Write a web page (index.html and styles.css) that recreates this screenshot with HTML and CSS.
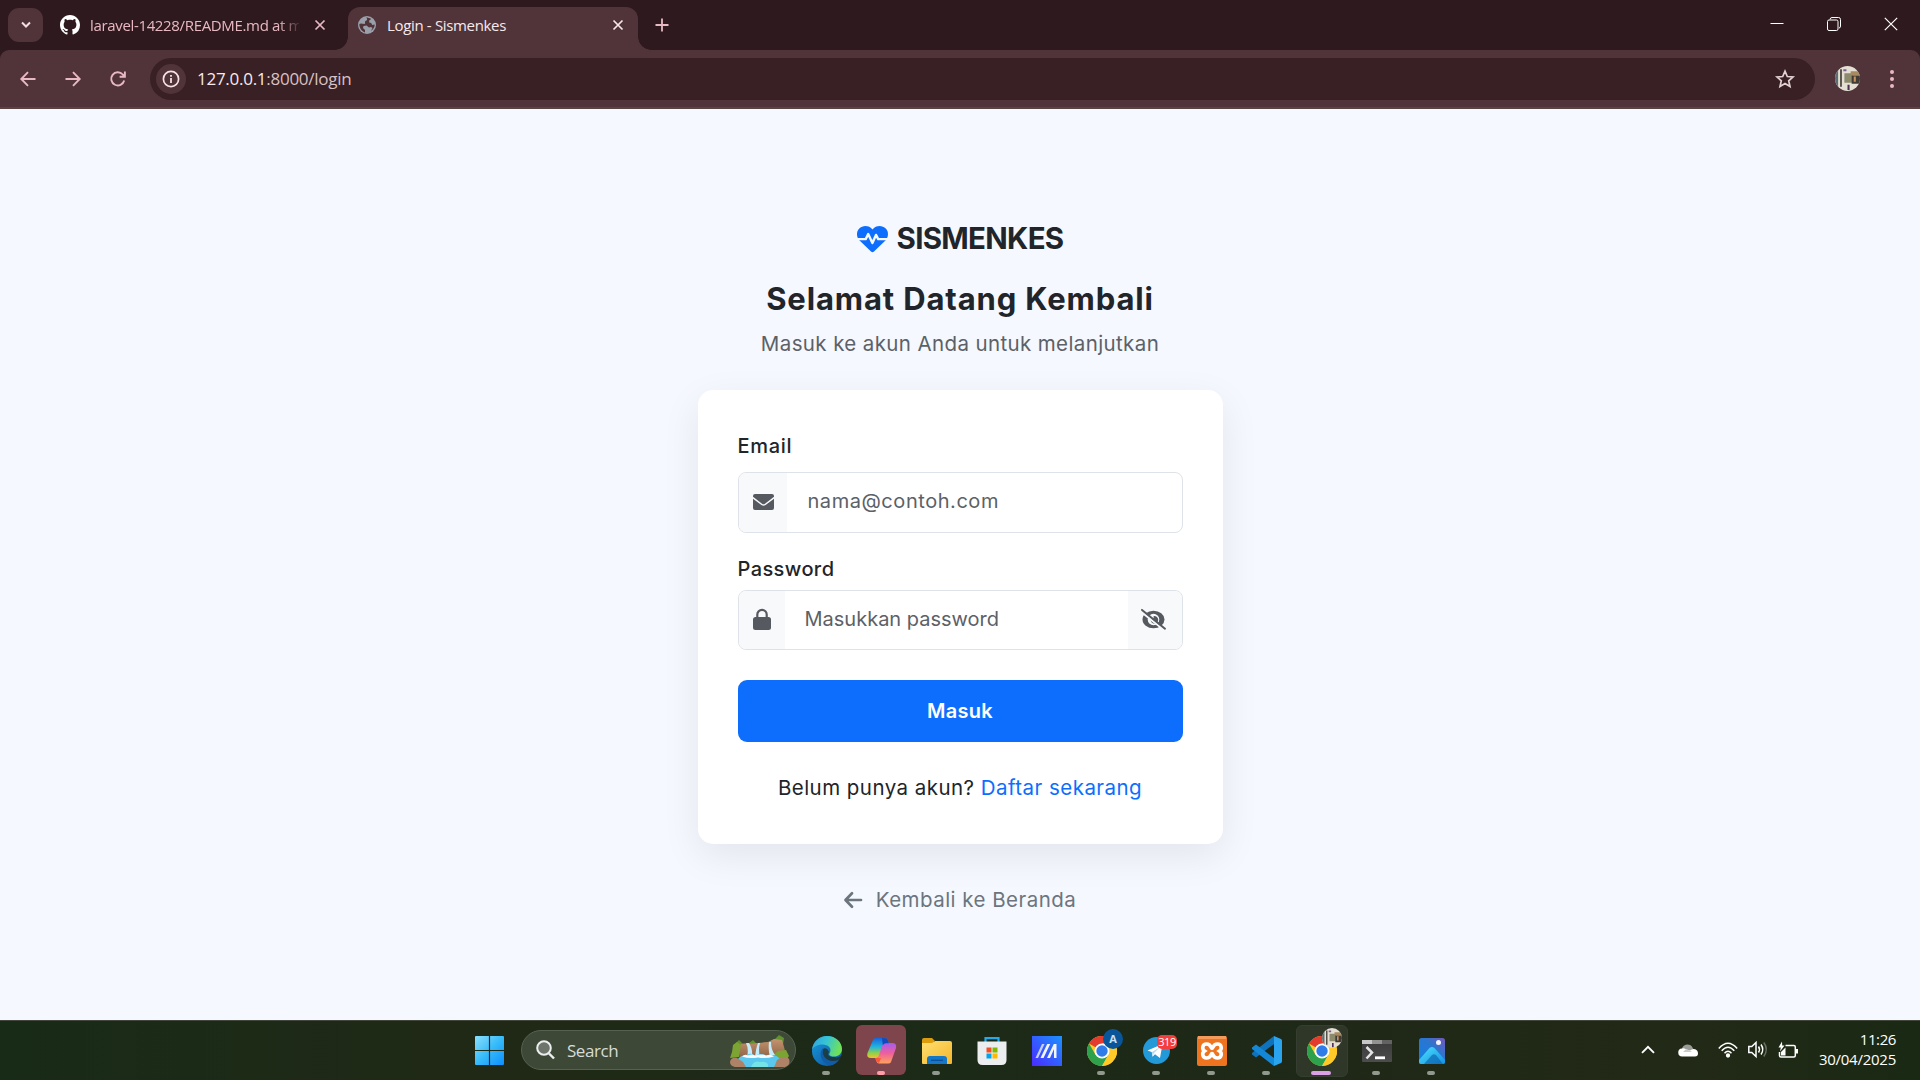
FILE: index.html
```html
<!DOCTYPE html>
<html lang="id">
<head>
<meta charset="utf-8">
<title>Login - Sismenkes</title>
<link rel="stylesheet" href="styles.css">
</head>
<body>
<svg class="defs" width="0" height="0" aria-hidden="true">
  <defs>
    <linearGradient id="win" x1="0" y1="0" x2="1" y2="1"><stop offset="0" stop-color="#8be0fc"/><stop offset=".5" stop-color="#37bbfa"/><stop offset="1" stop-color="#0c8fff"/></linearGradient>
    <linearGradient id="edgeTop" x1="0" y1="0" x2="1" y2=".3"><stop offset="0" stop-color="#2f9ee0"/><stop offset=".5" stop-color="#35c4d6"/><stop offset="1" stop-color="#6ee05c"/></linearGradient>
    <linearGradient id="edgeLow" x1="0" y1="0" x2="1" y2="1"><stop offset="0" stop-color="#1a9be0"/><stop offset="1" stop-color="#0b4f96"/></linearGradient>
    <linearGradient id="copA" x1="0" y1="0" x2="0" y2="1"><stop offset="0" stop-color="#1565e0"/><stop offset=".45" stop-color="#22b4dd"/><stop offset=".75" stop-color="#8fd04a"/><stop offset="1" stop-color="#f5c02c"/></linearGradient>
    <linearGradient id="copB" x1="0" y1="0" x2="0" y2="1"><stop offset="0" stop-color="#a55cf0"/><stop offset=".5" stop-color="#ee5f9c"/><stop offset="1" stop-color="#ffa35c"/></linearGradient>
    <linearGradient id="folder" x1="0" y1="0" x2="1" y2="1"><stop offset="0" stop-color="#ffdf70"/><stop offset="1" stop-color="#f4b62c"/></linearGradient>
    <linearGradient id="asus" x1="0" y1="1" x2="1" y2="0"><stop offset="0" stop-color="#4a2bff"/><stop offset="1" stop-color="#1c92ff"/></linearGradient>
    <linearGradient id="term" x1="0" y1="0" x2="0" y2="1"><stop offset="0" stop-color="#3a3a3a"/><stop offset="1" stop-color="#4c4c4c"/></linearGradient>
    <linearGradient id="photo" x1="0" y1="1" x2="1" y2="0"><stop offset="0" stop-color="#0f7fe6"/><stop offset=".6" stop-color="#2b76cf"/><stop offset="1" stop-color="#7656b8"/></linearGradient>
    <linearGradient id="hill" x1="0" y1="0" x2="1" y2="1"><stop offset="0" stop-color="#4fe0fb"/><stop offset="1" stop-color="#1391e6"/></linearGradient>
    <linearGradient id="rock" x1="0" y1="0" x2="0" y2="1"><stop offset="0" stop-color="#c49470"/><stop offset="1" stop-color="#8a6042"/></linearGradient>
    <symbol id="chrome" viewBox="0 0 30 30">
      <circle cx="15" cy="15" r="15" fill="#ffc928"/>
      <path d="M15 15 2 7.5A15 15 0 0 1 28 7.5H15z" fill="#e33b2e"/>
      <path d="M2 7.5A15 15 0 0 0 15 30L21.5 18.800 15 15 8.500 18.700z" fill="#2da14c"/>
      <path d="M15 7.500H28A15 15 0 0 1 15 30L21.500 18.800z" fill="#ffc928"/>
      <circle cx="15" cy="15" r="7.500" fill="#fff"/><circle cx="15" cy="15" r="5.700" fill="#2f7bea"/>
    </symbol>
    <symbol id="portrait" viewBox="0 0 24 24">
      <clipPath id="round"><circle cx="12" cy="12" r="12"/></clipPath>
      <g clip-path="url(#round)"><path fill="#e4dfd2" d="M0 0h24v24H0z"/><path fill="#5d6f72" d="M0 0h3v24H0z"/><path fill="#35302a" d="M5 3h1.500v17H5z"/><path fill="#8b8a6c" d="M9 7h8v9H9z"/><path fill="#a78a62" d="M15 5h9v4h-9z"/><path fill="#403c35" d="M16 9h8v8h-8z"/><path fill="#c8905f" d="M18 10h2v5h-2z"/><path fill="#7a5e93" d="M8 3h3v2H8z"/><path fill="#4c3354" d="M12 18h2v5h-2z"/></g>
    </symbol>
  </defs>
</svg>

<div class="screen">
  <header class="tabs">
    <div class="tab-search"><svg width="12" height="12" viewBox="0 0 12 12"><path d="m2 3.500 4 4 4-4" fill="none" stroke="#f3dfe2" stroke-width="2"/></svg></div>
    <div class="tab tab-idle">
      <svg width="20" height="20" viewBox="0 0 16 16" fill="#fff"><path d="M8 0C3.580 0 0 3.580 0 8c0 3.540 2.290 6.530 5.470 7.590.4.070.55-.17.55-.38 0-.19-.01-.82-.01-1.490-2.010.37-2.530-.49-2.690-.94-.09-.23-.48-.94-.82-1.130-.28-.15-.68-.52-.01-.53.63-.01 1.080.58 1.230.82.72 1.210 1.870.87 2.330.66.070-.52.28-.87.51-1.070-1.780-.2-3.640-.89-3.640-3.950 0-.87.31-1.590.82-2.150-.08-.2-.36-1.020.08-2.120 0 0 .67-.21 2.200.82.64-.18 1.320-.27 2-.27s1.360.09 2 .27c1.530-1.040 2.200-.82 2.200-.82.44 1.100.16 1.920.08 2.120.51.56.82 1.270.82 2.150 0 3.070-1.870 3.750-3.650 3.950.29.25.54.73.54 1.480 0 1.070-.01 1.930-.01 2.200 0 .21.15.46.55.38A8.010 8.010 0 0 0 16 8c0-4.420-3.580-8-8-8"/></svg>
      <span class="tab-title tab-title-idle">laravel-14228/README.md at m</span>
      <svg class="close" width="12" height="12" viewBox="0 0 12 12"><path d="m1.500 1.500 9 9m0-9-9 9" stroke="#e9b9c3" stroke-width="1.700"/></svg>
    </div>
    <div class="tab tab-active">
      <svg width="18" height="18" viewBox="0 0 18 18"><circle cx="9" cy="9" r="9" fill="#9aa0a9"/><path d="M8 1.500C10 3 9 4.500 7.500 5 6 6 8 7 6.500 8L3 7.500 1.300 8C1.300 12 4 15.500 7 16.500V14l-2-2 .5-2 3-.5 2.500 2 2-.5 1.500 1-1.500 3c2-1.300 3.700-3.700 3.700-6.500l-2.500.5-1-2-2-.5V4.500l2-1.500c-1.600-1-3.400-1.500-5.200-1.500z" fill="#50343a"/></svg>
      <span class="tab-title">Login - Sismenkes</span>
      <svg class="close" width="12" height="12" viewBox="0 0 12 12"><path d="m1.500 1.500 9 9m0-9-9 9" stroke="#f8e6e9" stroke-width="1.700"/></svg>
    </div>
    <svg class="plus" width="14" height="14" viewBox="0 0 14 14"><path d="M7 .5v13M.5 7h13" stroke="#e9b9c3" stroke-width="1.800"/></svg>
    <div class="window-buttons">
      <svg width="14" height="14" viewBox="0 0 14 14"><path d="M.5 6.500h13" stroke="#fff"/></svg>
      <svg width="14" height="14" viewBox="0 0 14 14" fill="none" stroke="#fff"><rect x=".5" y="3" width="10.500" height="10.500" rx="1.500"/><path d="M3 2.500Q3.200.5 5 .5h6.500q2 0 2 2V9q0 2-1.500 2"/></svg>
      <svg width="14" height="14" viewBox="0 0 14 14"><path d="m.8.8 12.400 12.400m0-12.400L.8 13.200" stroke="#fff" stroke-width="1.200"/></svg>
    </div>
  </header>

  <nav class="toolbar">
    <div class="nav-buttons">
      <svg width="16" height="16" viewBox="0 0 16 16"><path d="M15.500 8H1.500M8 1.200 1.300 8 8 14.800" /></svg>
      <svg width="16" height="16" viewBox="0 0 16 16"><path d="M.5 8h14M8 1.200 14.700 8 8 14.800"/></svg>
      <svg width="16" height="16" viewBox="0 0 16 16"><path d="M14.200 9.500A6.600 6.600 0 1 1 12.800 3.500L14.800 5.500M14.900.5v5.200H9.600"/></svg>
    </div>
    <div class="omnibox">
      <span class="site-info"><svg width="18" height="18" viewBox="0 0 18 18"><circle cx="9" cy="9" r="7.600" fill="none" stroke="#f6e1e5" stroke-width="1.700"/><path d="M9 8v5M9 5v1.800" stroke="#f6e1e5" stroke-width="1.800"/></svg></span>
      <span class="url">127.0.0.1<span class="path">:8000/login</span></span>
      <svg class="star" width="20" height="20" viewBox="0 0 20 20"><path d="m10 2.200 2.300 5.300 5.700.5-4.300 3.800 1.300 5.700-5-3-5 3 1.300-5.700L2 8l5.700-.5z" fill="none" stroke="#e2d0d3" stroke-width="1.700"/></svg>
    </div>
    <svg class="avatar" width="25" height="25"><use href="#portrait"/></svg>
    <svg class="menu" width="4" height="18" viewBox="0 0 4 18" fill="#e9b9c3"><circle cx="2" cy="2" r="2"/><circle cx="2" cy="9" r="2"/><circle cx="2" cy="16" r="2"/></svg>
  </nav>

  <main class="page">
    <div class="brand">
      <svg width="31" height="27" viewBox="0 0 31 27"><path d="M15.500 26.300q-.8 0-1.500-.7L2.300 14.200C-.6 11-.8 5.800 2 2.800 5.600-.9 11.200-.7 14.300 2.300l1.200 1.200 1.200-1.200c3.100-3 8.700-3.200 12.300.5 2.800 3 2.600 8.200-.3 11.400L17 25.600q-.7.7-1.500.7z" fill="#0d6efd"/><path d="M0 13.100h8.700l2.500-5 4.200 9 3.600-8.200 2.200 4.200H31" fill="none" stroke="#f5f8ff" stroke-width="2.400" stroke-linejoin="round"/></svg>
      <span>SISMENKES</span>
    </div>
    <h1>Selamat Datang Kembali</h1>
    <p class="lead">Masuk ke akun Anda untuk melanjutkan</p>

    <form class="card">
      <label class="label-email">Email</label>
      <div class="field field-email">
        <span class="addon"><svg width="21" height="16" viewBox="0 0 21 16" fill="#565a60"><path d="M0 4.700V14q0 2 2 2h17q2 0 2-2V4.700L12.600 11q-2.100 1.500-4.200 0z"/><path d="M0 2.800V2q0-2 2-2h17q2 0 2 2v.8l-9 6.900q-1.500 1-3 0z"/></svg></span>
        <span class="placeholder ph-email">nama@contoh.com</span>
      </div>
      <label class="label-password">Password</label>
      <div class="field field-password">
        <span class="addon"><svg width="18" height="21" viewBox="0 0 18 21"><path d="M4.300 9V5.500a4.700 4.700 0 0 1 9.400 0V9" fill="none" stroke="#565a60" stroke-width="2.200"/><rect y="8" width="18" height="13" rx="2.500" fill="#565a60"/></svg></span>
        <span class="placeholder ph-password">Masukkan password</span>
        <span class="addon toggle"><svg width="25" height="21" viewBox="0 0 25 21"><ellipse cx="12.500" cy="10.500" rx="11" ry="8.800" fill="#565a60"/><circle cx="12.500" cy="10.500" r="5.800" fill="#f8f9fb"/><path d="M12.500 7.200q1 3-2.800 3a3.800 3.800 0 1 0 2.800-3z" fill="#565a60"/><path d="M-.3 2.300 23.700 21.500" stroke="#f8f9fb" stroke-width="2.200"/><path d="M1 .9l23 18.800" stroke="#565a60" stroke-width="2" stroke-linecap="round"/></svg></span>
      </div>
      <button type="button" class="submit">Masuk</button>
      <p class="register">Belum punya akun? <a>Daftar sekarang</a></p>
    </form>

    <a class="back"><svg width="18" height="16" viewBox="0 0 18 16"><path d="M17 8H2M8 1.300 1.500 8 8 14.700" fill="none" stroke="#6c757d" stroke-width="2.700" stroke-linecap="round" stroke-linejoin="round"/></svg><span>Kembali ke Beranda</span></a>
  </main>

  <footer class="taskbar">
    <div class="app start"><svg width="29" height="29" viewBox="0 0 29 29" fill="url(#win)"><path d="M1 0h12.900v13.900H0V1q0-1 1-1zM15.100 0H28q1 0 1 1v12.900H15.100zM0 15.100h13.900V29H1q-1 0-1-1zM15.100 15.100H29V28q0 1-1 1H15.100z"/></svg></div>
    <div class="search">
      <svg width="19" height="20" viewBox="0 0 19 20"><circle cx="8" cy="8" r="6.800" fill="#6d756b" stroke="#eceef0" stroke-width="2"/><path d="m13 13.500 5 5" stroke="#eceef0" stroke-width="2.400"/></svg>
      <span>Search</span>
      <svg class="falls" width="60" height="32" viewBox="0 0 60 32">
        <path d="M5 8 9 4l4 4 6-1 4-3 4 4 12-2 6-3 4-4 5 3-1 7H5z" fill="#62912f"/>
        <path d="M8 11q3-5 10-3l10-1 10-1 6-3 8 1 4 14-3 5H10z" fill="url(#rock)"/>
        <path d="m0 22 2-6 1-7 4-3 4 3-2 12zM42 20l6-5 8-1 3 6-4 6z" fill="#7ba432"/>
        <path d="M16 7h3q4 6 3 14h-5q2-8-1-14zM28 7h2q-2 7 0 14h-5q1-9 3-14zM39 6h2q0 8 4 13l-5 2q-2-7-1-15z" fill="#c4ebfa"/>
        <path d="M8 23q3-4 9-4 4-3 8 1 6-4 12 0 8-3 13 3l-4 8H13z" fill="#59c7ee"/>
        <path d="M12 20.500q3-3 6-1 4-2 7 0 7-2 11 0 5-2 8 1-8 2.500-16 1-9 1.500-16-1z" fill="#f4fbff"/>
        <path d="M0 26q1-5 7-4l6 4 3 5H5q-5-1-5-5zM45 29l2-5q9-6 12-1 2 6-4 8H44z" fill="#ae8267"/>
        <path d="M21 31q3-7 9-5 9-1 8 5z" fill="#75e3e6"/>
      </svg>
    </div>

    <div class="apps">
      <div class="app running"><svg width="30" height="30" viewBox="0 0 30 30"><circle cx="15" cy="15" r="15" fill="url(#edgeLow)"/><path d="M0 14C1 5 8 0 15 0c9 0 15 6.500 15 13 0 5-4 7.500-8 7.500-3.500 0-5.500-1.500-4.500-3 3-5-1-9-7-9C5 8.500 1 11 0 14z" fill="url(#edgeTop)"/><path d="M11 13c-2 5 1 12 10 12 3 0 5-1 7-2l2-1v-3c-2 2-5 3-8 2-5 0-7-2-5-5-1-3-4-5-6-3z" fill="#1f2916" opacity=".7"/><path d="M11 12c-5 5-2 15 7 17.500 3-.5 6-2 8-5-8 3-17-2-15-12.500z" fill="#115ca8"/></svg></div>
      <div class="app tile-copilot running"><svg width="30" height="26" viewBox="0 0 30 26"><path d="M6 2q.6-2 3-2h9q2 0 2.800 2l1 3h-3q-2 0-3 3l-2.500 9q-1 3-4 3H4q-5 0-3.500-5z" fill="url(#copA)"/><path d="M24 24q-.6 1.500-3 1.500H12q-2 0-3-3l-.5-2.500q2.500 0 3.500-3L15 8q1-3 4-3h6q5 0 4 5z" fill="url(#copB)"/><path d="m15 0 3 .2q2 0 2.800 2l1 3h-3q-2 0-3 2z" fill="#1648bd"/><path d="m8 20h6l-2 5q-2 0-3-3z" fill="#fa5737"/></svg></div>
      <div class="app running"><svg width="30" height="28" viewBox="0 0 30 28"><path d="M0 3q0-2 2-2h8l3 3h-1v6H0z" fill="#dc9c0d"/><path d="M0 6h10l3-2h15q2 0 2 2v20q0 1-1 1H1q-1 0-1-1z" fill="url(#folder)"/><path d="M5 27v-5q0-3 3-3h14q3 0 3 3v5z" fill="#1577c8"/><path d="M9 23.300h12" stroke="#0b4f96" stroke-width="1.300"/></svg></div>
      <div class="app"><svg width="30" height="30" viewBox="0 0 30 30"><path d="M8.500 7V2.200H21.500V7" fill="none" stroke="#25a9e8" stroke-width="2.200"/><path d="M.5 5.500h29V24q0 5-5 5h-19q-5 0-5-5z" fill="#ecedef"/><path fill="#f25022" d="M9.500 11.500h5v5h-5z"/><path fill="#7fba00" d="M15.500 11.500h5v5h-5z"/><path fill="#00a4ef" d="M9.500 17.500h5v5h-5z"/><path fill="#ffb900" d="M15.500 17.500h5v5h-5z"/></svg></div>
      <div class="app"><svg width="30" height="30" viewBox="0 0 30 30"><path fill="url(#asus)" d="M0 0h30v30H0z"/><path d="M3.500 22 10 8h2.500L6 22z" fill="#c5cfff"/><path d="M8.500 22 15.200 8h3L11.500 22z" fill="#f4f6ff"/><path d="M15 22 21.800 8h2.700v14H22v-9l-4 9z" fill="#f4f6ff"/></svg></div>
      <div class="app running"><svg width="30" height="30"><use href="#chrome"/></svg><b class="profile-letter">A</b></div>
      <div class="app running"><svg width="27" height="27" viewBox="0 0 27 27"><circle cx="13.500" cy="13.500" r="13.500" fill="#2499d8"/><path d="m4.500 13.500 15-6.500-2.500 14-5-3.700-2.500 2.400-.8-4.700z" fill="#fff"/><path d="m9 15 8-5-6 6-1.500 3.500z" fill="#b7d9ee"/></svg><b class="count">319</b></div>
      <div class="app running"><svg width="30" height="30" viewBox="0 0 30 30"><rect width="30" height="30" rx="2" fill="#ef7420"/><path d="M1 0h28v3H1z" fill="#f59a5a"/><path d="M9.500 8c-4 0-5 5-2 7-3 2-2 7 2 7 5 0 4-4.500 5.500-4.500S15.500 22 20.500 22c4 0 5-5 2-7 3-2 2-7-2-7-5 0-4 4.500-5.500 4.500S14.500 8 9.500 8z" fill="none" stroke="#fff" stroke-width="3.600"/></svg></div>
      <div class="app running"><svg width="30" height="30" viewBox="0 0 30 30"><path d="M22 0v8L4 21.500 0 18.500v-1.500z" fill="#0e72bd"/><path d="M22 30v-8L4 8.500 0 11.500V13z" fill="#1488d6"/><path d="m22 0 7 3q1 .5 1 2v20q0 1.500-1 2l-7 3z" fill="#2ba4ef"/></svg></div>
      <div class="app tile-current current"><svg width="30" height="30"><use href="#chrome"/></svg><svg class="profile-photo" width="20" height="20"><use href="#portrait"/></svg></div>
      <div class="app running"><svg width="30" height="22" viewBox="0 0 30 22"><rect width="30" height="22" rx="1" fill="url(#term)"/><path fill="#c7c7c7" d="M0 0h10v4H0z"/><path fill="#929292" d="M10 0h10v4H10z"/><path fill="#626262" d="M20 0h10v4H20z"/><path d="m4.500 7 5.500 5.500-5.500 6" fill="none" stroke="#e4e4e4" stroke-width="2.500"/><path d="M13 17.800h10" stroke="#fff" stroke-width="2.800"/></svg></div>
      <div class="app running"><svg width="26" height="26" viewBox="0 0 26 26"><rect width="26" height="26" rx="2.500" fill="url(#photo)"/><path d="m0 22 10.500-12q2.500-2 5 0L26 22v2q0 2-2 2H2q-2 0-2-2z" fill="url(#hill)"/><path d="m5 26 8-9q2-1.500 4 0l7 9z" fill="#0d62ac" opacity=".65"/><circle cx="19.500" cy="4.500" r="2.500" fill="#f2f4f8"/></svg></div>
    </div>

    <div class="tray">
      <svg width="14" height="9" viewBox="0 0 14 9"><path d="m1 7.800 6-6 6 6" fill="none" stroke="#fff" stroke-width="1.900"/></svg>
      <svg class="cloud" width="20" height="14" viewBox="0 0 20 14"><path d="M4 9a5.500 5.500 0 0 1 11-3.500L18 9z" fill="#9a9d97"/><path d="M4.500 13.500a4 4 0 0 1-.5-8q2-.5 4 .8l4 1.200q2-1.700 4-1.500 4 .7 4 4.500 0 3-3 3z" fill="#fff"/><path d="m5 9 3-2.700q4 1 6 2.700z" fill="#c9ccc8"/></svg>
      <svg class="wifi" width="20" height="16" viewBox="0 0 20 16" fill="none" stroke="#fff" stroke-width="1.500"><path d="M.8 6.500Q10-4 19.200 6.500M3.700 8.800q6.300-7.300 12.600 0M6.500 11.200q3.500-3.900 7 0"/><circle cx="10" cy="13.500" r="1.400" fill="#fff"/></svg>
      <svg class="volume" width="20" height="17" viewBox="0 0 20 17" fill="none" stroke="#fff" stroke-width="1.500"><path d="M.8 5.500h3L8 1.500v14l-4.200-4h-3z"/><path d="M10.500 5.500q2 3 0 6M13 3.500q3.500 5 0 10"/><path d="M15.800 1.500q5 7 0 14" stroke="#687062"/></svg>
      <svg class="battery" width="21" height="18" viewBox="0 0 21 18" fill="none" stroke="#fff" stroke-width="1.500"><path d="M7.500 4.500h8.300q1.500 0 1.500 1.500v8.500q0 1.500-1.500 1.500H3q-1.500 0-1.500-1.500V11"/><path d="M19 8v4.500" stroke-width="2"/><path d="M4 .5.500 6.500h2.300L2 10.500 6.500 4.500H4.200z" fill="#fff" stroke="none"/><path d="M3 14.500V11l4.500-4.500v8z" fill="#fff" stroke="none"/></svg>
      <div class="clock"><span class="time">11:26</span><span class="date">30/04/2025</span></div>
    </div>
  </footer>
</div>
</body>
</html>
```
FILE: styles.css
```css
* { box-sizing: border-box; }
body { margin: 0; overflow: hidden; font-family: "Open Sans", "Noto Sans", sans-serif; }
svg { display: block; flex: none; overflow: visible; }
.defs { position: absolute; }
.screen { width: 1920px; height: 1080px; display: flex; flex-direction: column; background: #2e191e; }

/* Browser tabs */
.tabs { height: 50px; flex: none; display: flex; background: #2e191e; padding-left: 8px; }
.tab-search { width: 35px; height: 34px; margin-top: 8px; border-radius: 11px; background: #50343a; display: grid; place-items: center; }
.tab { height: 43px; margin-top: 7px; padding-bottom: 7px; display: flex; align-items: center; white-space: nowrap; font-size: 15px; }
.tab-idle { width: 305px; padding-left: 17px; padding-right: 22px; }
.tab-idle .tab-title { color: #e9b9c3; margin-left: 10px; width: 209px; overflow: hidden; -webkit-mask-image: linear-gradient(90deg, #000 188px, transparent 212px); mask-image: linear-gradient(90deg, #000 188px, transparent 212px); }
.tab-title { letter-spacing: -.34px; line-height: 24px; }
.tab-active { position: relative; width: 290px; padding-left: 10px; padding-right: 14px; border-radius: 12px 12px 0 0; background: #50343a; color: #f8e9eb; }
.tab-active::before, .tab-active::after { content: ""; position: absolute; bottom: 0; width: 13px; height: 13px; }
.tab-active::before { left: -13px; background: radial-gradient(circle at 0 0, transparent 12.500px, #50343a 13px); }
.tab-active::after { right: -13px; background: radial-gradient(circle at 100% 0, transparent 12.500px, #50343a 13px); }
.tab-active .tab-title { margin-left: 11px; }
.close { margin-left: auto; }
.plus { margin: 18px 0 0 17px; }
.window-buttons { display: flex; gap: 43px; margin: 17px 22px 0 auto; }

/* Address bar */
.toolbar { height: 59px; flex: none; display: flex; align-items: center; background: linear-gradient(#50343a, #50343a) 0 0 / 100% 57px no-repeat, #5a4442; padding: 0 26px 2px 20px; border-radius: 9px 9px 0 0; }
.nav-buttons { display: flex; gap: 29px; fill: none; stroke: #e9b9c3; stroke-width: 1.900; }
.omnibox { width: 1665px; height: 42px; margin-left: 24px; border-radius: 21px; background: #382024; display: flex; align-items: center; padding: 0 20px 0 6px; }
.site-info { width: 30px; height: 30px; border-radius: 50%; background: #50343a; display: grid; place-items: center; }
.url { margin-left: 11px; font-size: 17px; letter-spacing: -.27px; color: #f8eaec; }
.path { color: #d8c1c5; }
.star { margin-left: auto; }
.avatar { margin-left: 20px; }
.menu { margin-left: auto; }

/* Login page */
.page { height: 911px; flex: none; background: #f5f8ff; display: flex; flex-direction: column; align-items: center; font-family: Inter, "Open Sans", sans-serif; font-size: 20px; color: #212529; }
.brand { display: flex; align-items: center; gap: 9px; height: 40px; margin-top: 109px; font-size: 29.500px; font-weight: 700; letter-spacing: -.7px; }
.brand svg { margin-top: 2px; }
.brand span { line-height: 40px; }
h1 { margin: 22px 0 0; font-size: 31px; line-height: 38px; font-weight: 700; letter-spacing: .86px; }
.lead { margin: 11px 0 0; font-size: 20.500px; line-height: 30px; letter-spacing: .38px; color: #5c6167; }
.card { width: 525px; height: 454px; margin-top: 31px; padding: 41px 40px 0; border-radius: 15px; background: #fff; box-shadow: 0 12px 38px rgba(0, 0, 0, .08); display: flex; flex-direction: column; }
label { line-height: 30px; font-weight: 500; }
.label-email { letter-spacing: .7px; }
.label-password { letter-spacing: .4px; margin-top: 21px; }
.field { display: flex; border: 1px solid #dee2e9; border-radius: 8px; overflow: hidden; }
.field-email { height: 61px; margin-top: 11px; }
.field-password { height: 60px; margin-top: 6px; }
.addon { width: 46px; background: #f8f9fb; display: flex; align-items: center; justify-content: flex-start; padding: 0 0 1px 14px; }
.field-email .addon { width: 48px; }
.toggle { width: 54px; margin-left: auto; padding-left: 13px; }
.placeholder { margin-left: 20px; line-height: 57px; color: #5c6167; }
.ph-email { letter-spacing: .55px; margin-left: 21px; }
.ph-password { letter-spacing: 0; }
.submit { width: 100%; height: 62px; margin-top: 30px; border: 0; border-radius: 9px; background: #0d6efd; color: #fff; font: 600 20px Inter, sans-serif; letter-spacing: .3px; }
.register { margin: 31px 0 0; font-size: 20.500px; line-height: 30px; text-align: center; letter-spacing: .46px; }
.register a { color: #0d6efd; }
.back { display: flex; align-items: center; gap: 14px; margin-top: 41px; font-size: 20.500px; line-height: 30px; letter-spacing: .47px; color: #6c757d; }

/* Taskbar */
.taskbar { height: 60px; flex: none; display: flex; border-top: 1px solid #43473b; background: linear-gradient(90deg, #182b16, #202916 25%, #1b2a16 50%, #202816 75%, #222917 88%, #1a2914); padding-left: 462px; color: #fff; }
.app { position: relative; width: 55px; height: 59px; display: grid; place-items: center; }
.search { width: 275px; height: 40px; margin: 9px 3px 0 4px; padding-left: 14px; border: 1px solid #566152; border-radius: 20px; background: #3d4936; display: flex; align-items: center; font-size: 17px; letter-spacing: -.45px; color: #d8dcd6; }
.search span { margin-left: 12px; }
.falls { margin-left: auto; margin-right: 5px; margin-top: 3px; }
.apps { display: flex; }
.running::after, .current::after { content: ""; position: absolute; bottom: 5px; left: 23px; width: 8px; height: 4px; border-radius: 2px; background: #91988d; }
.current::after { left: 17px; width: 20px; background: #dca0e6; }
.tile-copilot::before, .tile-current::before { content: ""; position: absolute; left: 2px; top: 4px; width: 50px; height: 50px; border-radius: 6px; background: #7f454c; }
.tile-current::before { background: #2e3728; border: 1px solid #353e30; }
.tile-copilot::after { background: #ff9da9; }
.app svg { position: relative; }
.app b { position: absolute; }
.profile-letter { left: 29px; top: 8px; width: 20px; height: 20px; border-radius: 50%; background: #09559a; text-align: center; font-size: 11px; line-height: 20px; color: #c9e1f5; }
.count { left: 28px; top: 14px; width: 20px; height: 14px; border-radius: 5px; background: #f43d3d; text-align: center; font-size: 11px; font-weight: 400; line-height: 14px; letter-spacing: -.5px; }
.app .profile-photo { position: absolute; left: 28px; top: 7px; }
.tray { margin-left: auto; padding: 0 24px 2px 0; display: flex; align-items: center; }
.cloud { margin-left: 23px; }
.wifi { margin-left: 20px; }
.volume { margin-left: 10px; }
.battery { margin-left: 10px; }
.clock { width: 97px; margin-top: -2px; display: flex; flex-direction: column; align-items: flex-end; font-size: 15px; line-height: 20px; }
.time { letter-spacing: -.4px; }
.date { letter-spacing: -.25px; }
```
